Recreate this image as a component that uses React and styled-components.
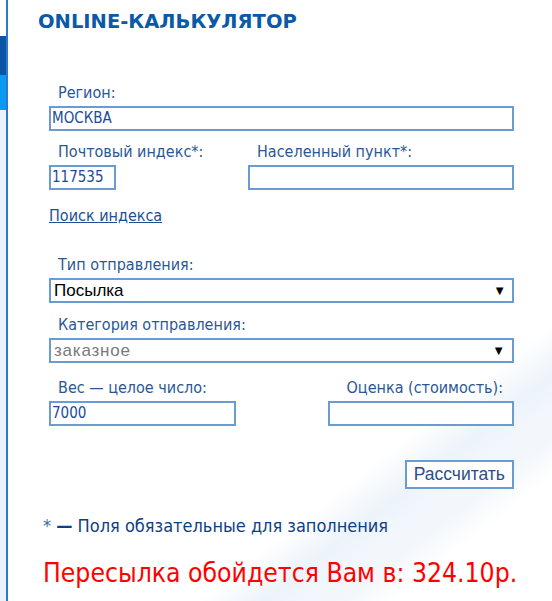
import React from "react";
import styled, { createGlobalStyle } from "styled-components";

const GlobalStyle = createGlobalStyle`
  html, body { margin: 0; padding: 0; background: #fff; }
  body { font-family: "DejaVu Sans Condensed", "DejaVu Sans", sans-serif; }
`;

const Page = styled.div`
  display: flex;
  width: 552px;
  height: 601px;
  overflow: hidden;
`;

/* narrow decorative rail on the left edge */
const Rail = styled.div`
  flex: 0 0 6px;
  border-right: 2px solid #2f7ac8;
  background:
    linear-gradient(
      to bottom,
      #ffffff 0px,
      #ffffff 36px,
      #0a55a6 36px,
      #0a55a6 75px,
      #0a9af5 75px,
      #0a9af5 110px,
      #eaf2fb 110px,
      #eaf2fb 100%
    );
`;

const Main = styled.div`
  flex: 1;
  min-width: 0;
  padding: 9px 38px 0 30px;
  background: linear-gradient(
    142deg,
    transparent 73%,
    rgba(214, 229, 244, 0.45) 78%,
    rgba(236, 243, 251, 0.7) 81%,
    rgba(220, 233, 246, 0.35) 84%,
    transparent 88%
  );
`;

const Title = styled.h1`
  margin: 0;
  font-family: "DejaVu Sans", sans-serif;
  font-weight: bold;
  font-size: 19.5px;
  line-height: 26px;
  color: #0b5aa8;
`;

const Form = styled.div`
  display: flex;
  flex-direction: column;
  padding-left: 11px;
  margin-top: 49px;
`;

const Row = styled.div`
  display: flex;
  justify-content: space-between;
  align-items: flex-end;
  margin-top: ${(p) => p.$gap || 0}px;
`;

const Field = styled.div`
  display: flex;
  flex-direction: column;
  width: ${(p) => p.$w || "100%"};
  margin-top: ${(p) => p.$gap || 0}px;
  align-items: ${(p) => (p.$right ? "flex-end" : "stretch")};
`;

const Label = styled.div`
  font-size: 16px;
  line-height: 18px;
  color: #2a5795;
  padding: 0 ${(p) => (p.$right ? "11px" : "0")} 4px ${(p) => (p.$right ? "0" : "9px")};
  white-space: nowrap;
`;

const Input = styled.div`
  box-sizing: border-box;
  width: 100%;
  height: 25px;
  border: 2px solid #6b9bd3;
  background: #fff;
  font-size: 15px;
  line-height: 21px;
  padding: 0 1px;
  color: #1a4c96;
`;

const Select = styled.div`
  box-sizing: border-box;
  display: flex;
  justify-content: space-between;
  align-items: center;
  width: 100%;
  height: 25px;
  border: 2px solid #6b9bd3;
  background: #fff;
  padding: 0 6px 0 3px;
  font-family: "Liberation Sans", Arial, sans-serif;
  font-size: 17px;
  color: ${(p) => (p.$muted ? "#7a7a7a" : "#000")};
  letter-spacing: ${(p) => (p.$muted ? "0.8px" : "0")};
`;

const Arrow = styled.span`
  font-size: 13px;
  color: #000;
`;

const Link = styled.a`
  margin-top: 17px;
  font-size: 16px;
  line-height: 18px;
  color: #1d4f92;
  text-decoration: underline;
  align-self: flex-start;
  cursor: pointer;
`;

const Actions = styled.div`
  display: flex;
  justify-content: flex-end;
  margin-top: 34px;
`;

const Button = styled.button`
  box-sizing: border-box;
  height: 29px;
  padding: 0 7px;
  border: 2px solid #6b9bd3;
  background: #fff;
  font-family: "Liberation Sans", Arial, sans-serif;
  font-size: 17.5px;
  color: #2b4f86;
`;

const Note = styled.div`
  margin-top: 27px;
  padding-left: 5px;
  font-size: 18px;
  line-height: 20px;
  color: #0d3f83;
`;

const Star = styled.span`
  color: #3d6ca8;
`;

const Dash = styled.b`
  color: #0b3f86;
`;

const Result = styled.div`
  margin-top: 21px;
  padding-left: 5px;
  font-size: 26.3px;
  line-height: 32px;
  color: #ff0000;
  white-space: nowrap;
`;

export default function App() {
  return (
    <>
      <GlobalStyle />
      <Page>
        <Rail />
        <Main>
          <Title>ONLINE-КАЛЬКУЛЯТОР</Title>
          <Form>
            <Field>
              <Label>Регион:</Label>
              <Input>МОСКВА</Input>
            </Field>

            <Row $gap={12}>
              <Field $w="67px">
                <Label>Почтовый индекс*:</Label>
                <Input>117535</Input>
              </Field>
              <Field $w="266px">
                <Label>Населенный пункт*:</Label>
                <Input />
              </Field>
            </Row>

            <Link>Поиск индекса</Link>

            <Field $gap={31}>
              <Label>Тип отправления:</Label>
              <Select>
                <span>Посылка</span>
                <Arrow>▼</Arrow>
              </Select>
            </Field>

            <Field $gap={13}>
              <Label>Категория отправления:</Label>
              <Select $muted>
                <span>заказное</span>
                <Arrow>▼</Arrow>
              </Select>
            </Field>

            <Row $gap={16}>
              <Field $w="187px">
                <Label>Вес — целое число:</Label>
                <Input>7000</Input>
              </Field>
              <Field $w="186px" $right>
                <Label $right>Оценка (стоимость):</Label>
                <Input />
              </Field>
            </Row>

            <Actions>
              <Button>Рассчитать</Button>
            </Actions>
          </Form>

          <Note>
            <Star>*</Star> <Dash>—</Dash> Поля обязательные для заполнения
          </Note>
          <Result>Пересылка обойдется Вам в: 324.10р.</Result>
        </Main>
      </Page>
    </>
  );
}
